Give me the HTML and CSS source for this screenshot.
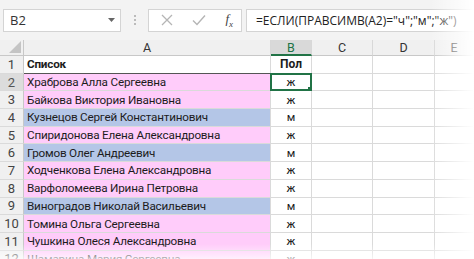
FILE: index.html
```html
<!DOCTYPE html>
<html lang="ru">

<head>
    <meta charset="UTF-8">
    <meta name="viewport" content="width=device-width, initial-scale=1.0">
    <title>Пол по отчеству</title>
    <link rel="stylesheet" href="styles.css">
</head>

<body>
    <div class="sheet">
        <!-- formula bar -->
        <div class="formula-bar">
            <div class="name-box">
                <span>B2</span>
                <svg class="drop" width="7" height="4" viewBox="0 0 7 4"><path d="M0 0h7L3.5 4z" fill="#666"/></svg>
            </div>
            <div class="grip"><i></i><i></i><i></i></div>
            <div class="buttons">
                <svg width="12" height="12" viewBox="0 0 12 12"><path d="M1 1l10 10M11 1L1 11" stroke="#b5b5b5" stroke-width="1.3" fill="none"/></svg>
                <svg width="14" height="12" viewBox="0 0 14 12"><path d="M1 6.5l4 4L13 1.5" stroke="#b5b5b5" stroke-width="1.4" fill="none"/></svg>
                <span class="fx">f<sub>x</sub></span>
            </div>
            <div class="formula">=ЕСЛИ(ПРАВСИМВ(A2)="ч";"м";"ж")</div>
        </div>

        <!-- grid -->
        <div class="grid">
            <div class="corner"><svg width="12" height="12" viewBox="0 0 12 12"><path d="M12 0v12H0z" fill="#c4c4c4"/></svg></div>
            <div class="col-head">A</div>
            <div class="col-head active">B</div>
            <div class="col-head">C</div>
            <div class="col-head">D</div>
            <div class="col-head">E</div>

            <div class="row-head">1</div>
            <div class="cell name head">Список</div>
            <div class="cell pol head">Пол</div>
            <div class="cell"></div><div class="cell"></div><div class="cell"></div>

            <div class="row-head active">2</div>
            <div class="cell name pink">Храброва Алла Сергеевна</div>
            <div class="cell pol selected">ж</div>
            <div class="cell"></div><div class="cell"></div><div class="cell"></div>

            <div class="row-head">3</div>
            <div class="cell name pink">Байкова Виктория Ивановна</div>
            <div class="cell pol">ж</div>
            <div class="cell"></div><div class="cell"></div><div class="cell"></div>

            <div class="row-head">4</div>
            <div class="cell name blue">Кузнецов Сергей Константинович</div>
            <div class="cell pol">м</div>
            <div class="cell"></div><div class="cell"></div><div class="cell"></div>

            <div class="row-head">5</div>
            <div class="cell name pink">Спиридонова Елена Александровна</div>
            <div class="cell pol">ж</div>
            <div class="cell"></div><div class="cell"></div><div class="cell"></div>

            <div class="row-head">6</div>
            <div class="cell name blue">Громов Олег Андреевич</div>
            <div class="cell pol">м</div>
            <div class="cell"></div><div class="cell"></div><div class="cell"></div>

            <div class="row-head">7</div>
            <div class="cell name pink">Ходченкова Елена Александровна</div>
            <div class="cell pol">ж</div>
            <div class="cell"></div><div class="cell"></div><div class="cell"></div>

            <div class="row-head">8</div>
            <div class="cell name pink">Варфоломеева Ирина Петровна</div>
            <div class="cell pol">ж</div>
            <div class="cell"></div><div class="cell"></div><div class="cell"></div>

            <div class="row-head">9</div>
            <div class="cell name blue">Виноградов Николай Васильевич</div>
            <div class="cell pol">м</div>
            <div class="cell"></div><div class="cell"></div><div class="cell"></div>

            <div class="row-head">10</div>
            <div class="cell name pink">Томина Ольга Сергеевна</div>
            <div class="cell pol">ж</div>
            <div class="cell"></div><div class="cell"></div><div class="cell"></div>

            <div class="row-head">11</div>
            <div class="cell name pink">Чушкина Олеся Александровна</div>
            <div class="cell pol">ж</div>
            <div class="cell"></div><div class="cell"></div><div class="cell"></div>

            <div class="row-head">12</div>
            <div class="cell name pink">Шамарина Мария Сергеевна</div>
            <div class="cell pol">ж</div>
            <div class="cell"></div><div class="cell"></div><div class="cell"></div>
        </div>
        <div class="fade"></div>
    </div>
</body>

</html>
```

FILE: styles.css
```css
/* spreadsheet look */
body {
    margin: 0;
    padding: 0;
    background: #fff;
    font-family: "Open Sans", "Noto Sans", sans-serif;
    color: #222;
    overflow: hidden;
}

.sheet {
    position: relative;
    width: 474px;
    height: 259px;
    overflow: hidden;
    background: #f3f3f3;
}

/* formula bar */
.formula-bar {
    display: flex;
    align-items: center;
    height: 40px;
    padding-left: 3px;
    box-sizing: border-box;
    background: #f3f3f3;
}

.name-box {
    display: flex;
    align-items: center;
    justify-content: space-between;
    width: 118px;
    height: 23px;
    padding: 0 5px 0 6px;
    box-sizing: border-box;
    background: #fff;
    border: 1px solid #d4d4d4;
    font-size: 13px;
    color: #333;
}

.grip {
    display: flex;
    flex-direction: column;
    gap: 2px;
    margin: 0 12px 0 13px;
}

.grip i {
    display: block;
    width: 2px;
    height: 2px;
    background: #bbb;
}

.buttons {
    display: flex;
    align-items: center;
    justify-content: space-between;
    width: 94px;
    height: 23px;
    padding: 0 8px 0 12px;
    box-sizing: border-box;
    background: #fff;
    border: 1px solid #d4d4d4;
}

.fx {
    font-family: "Liberation Serif", serif;
    font-style: italic;
    font-size: 13px;
    color: #444;
}

.fx sub {
    font-size: 9px;
}

.formula {
    flex: 1;
    height: 23px;
    margin-left: 4px;
    padding-left: 9px;
    box-sizing: border-box;
    background: #fff;
    border: 1px solid #d4d4d4;
    border-right: none;
    font-size: 12px;
    line-height: 21px;
    color: #222;
    white-space: nowrap;
}

/* grid */
.grid {
    display: grid;
    grid-template-columns: 24px 247px 41px 61px 62px 1fr;
    grid-template-rows: 16px repeat(12, 17.7px);
    background: #fff;
    font-family: Roboto, "Open Sans", sans-serif;
}

.corner {
    display: flex;
    align-items: flex-end;
    justify-content: flex-end;
    padding: 0 2px 2px 0;
    background: #f0f0f0;
    border-right: 1px solid #c8c8c8;
    border-bottom: 1px solid #c8c8c8;
}

.col-head {
    display: flex;
    align-items: center;
    justify-content: center;
    background: #f0f0f0;
    border-right: 1px solid #d8d8d8;
    border-bottom: 1px solid #c8c8c8;
    font-size: 12.5px;
    color: #333;
}

.col-head.active {
    background: #d9d9d9;
    color: #217346;
    border-bottom: 2px solid #217346;
}

.row-head {
    display: flex;
    align-items: center;
    justify-content: center;
    background: #f0f0f0;
    border-right: 1px solid #c8c8c8;
    border-bottom: 1px solid #dadada;
    font-size: 13px;
    color: #444;
}

.row-head.active {
    background: #dcdcdc;
    color: #555;
}

.cell {
    display: flex;
    align-items: center;
    padding: 0 3px;
    border-right: 1px solid #dadada;
    border-bottom: 1px solid #dadada;
    font-size: 11.7px;
    letter-spacing: -0.2px;
    color: #1c1c1c;
    white-space: nowrap;
    overflow: hidden;
}

.cell.head {
    font-weight: bold;
}

.cell.name.head {
    border-bottom: 1px solid #555;
}

.cell.pol {
    justify-content: center;
    font-size: 11.5px;
    letter-spacing: 0;
}

.cell.pol.head {
    font-size: 12px;
}

.pink {
    background: #ffccfa;
}

.blue {
    background: #b4c6e7;
}

.cell.selected {
    position: relative;
    border: 2px solid #217346;
    margin: -1px 0 0 -1px;
}

.cell.selected::after {
    content: "";
    position: absolute;
    right: -4px;
    bottom: -4px;
    width: 5px;
    height: 5px;
    background: #217346;
    border: 1px solid #fff;
}

/* soft edges of the screenshot */
.fade {
    position: absolute;
    inset: 0;
    pointer-events: none;
    background:
        linear-gradient(to right, rgba(255,255,255,0) 430px, #fff 474px),
        linear-gradient(to bottom, rgba(255,255,255,0) 244px, rgba(255,255,255,0.7) 259px);
}
```
